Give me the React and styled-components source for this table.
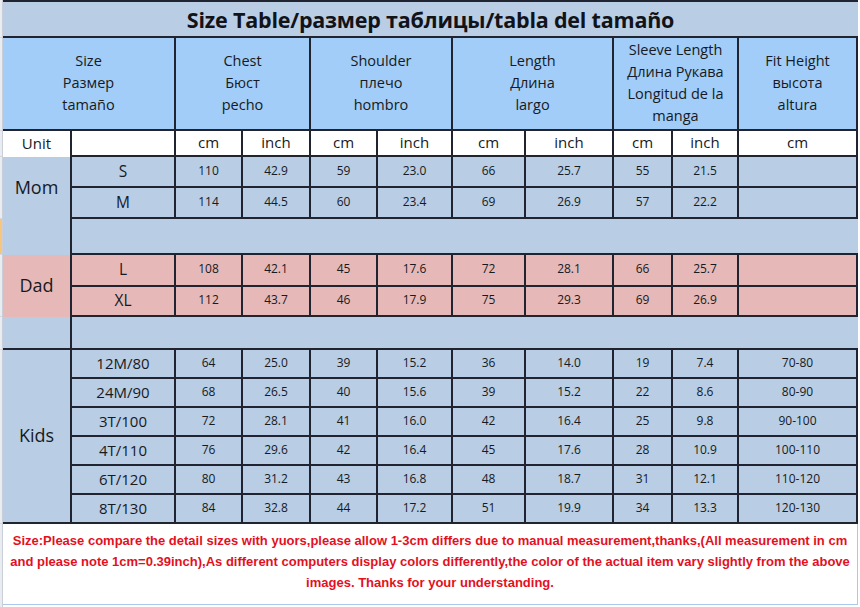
import React from "react";
import styled, { createGlobalStyle } from "styled-components";

const GlobalStyle = createGlobalStyle`
  html, body {
    margin: 0;
    padding: 0;
    background: #ffffff;
  }
  body {
    font-family: "Open Sans", "Noto Sans", "Liberation Sans", sans-serif;
    color: #161a22;
  }
`;

const LINE = "2px solid #1f2430";
const COLS = [69, 104, 67, 68, 67, 75, 73, 88, 59, 66, 119];
const TONES = {
  sky: "#a2cdf8",
  blue: "#b9cde5",
  pink: "#e6b9b8",
  white: "#ffffff",
};

const Page = styled.div`
  display: flex;
  width: 860px;
  height: 607px;
  overflow: hidden;
`;

const Gutter = styled.div`
  width: 3px;
  display: flex;
  flex-direction: column;
  background: #e9ecf1;
  border-right: 1px solid #c9ced8;
  box-sizing: border-box;
`;

const GutterMark = styled.div`
  height: ${(p) => p.$h}px;
  background: ${(p) => p.$color || "transparent"};
  border-bottom: 1px solid #d4d8df;
  box-sizing: border-box;
`;

const Sheet = styled.div`
  width: 855px;
  display: flex;
  flex-direction: column;
`;

const Grid = styled.div`
  display: grid;
  grid-template-columns: ${COLS.map((c) => `${c}px`).join(" ")};
  grid-template-rows: 38px 93px 26px 31px 31px 36px 32px 30px 33px repeat(6, 29px);
`;

const Cell = styled.div`
  box-sizing: border-box;
  display: flex;
  align-items: center;
  justify-content: center;
  text-align: center;
  background: ${(p) => TONES[p.$tone || "blue"]};
  border-right: ${(p) => (p.$noRight ? "none" : LINE)};
  border-bottom: ${(p) => (p.$noBottom ? "none" : LINE)};
  grid-column: span ${(p) => p.$span || 1};
  grid-row: span ${(p) => p.$rows || 1};
  font-size: 12px;
  white-space: nowrap;
`;

const TitleCell = styled(Cell)`
  border-top: ${LINE};
  border-right: none;
  font-size: 21.5px;
  font-weight: 700;
  color: #111318;
  letter-spacing: -0.2px;
`;

const HeaderCell = styled(Cell)`
  flex-direction: column;
  font-size: 14.5px;
  line-height: 22px;
  white-space: normal;
  padding-bottom: 2px;
`;

const UnitCell = styled(Cell)`
  font-size: 15px;
  padding-bottom: 2px;
`;

const GroupCell = styled(Cell)`
  font-size: 18px;
  padding-bottom: 2px;
`;

const SizeCell = styled(Cell)`
  font-size: ${(p) => (p.$kid ? 15 : 15.5)}px;
  padding-bottom: 2px;
`;

const ValueCell = styled(Cell)`
  font-size: 12px;
  padding-bottom: 3px;
`;

const Footer = styled.div`
  box-sizing: border-box;
  height: 83px;
  padding-top: 6px;
  border-right: 1px solid #a9c8ea;
  border-bottom: 1px solid #a9c8ea;
  margin-bottom: 2px;
  text-align: center;
  color: #e3101e;
  font-family: "Liberation Sans", Arial, sans-serif;
  font-weight: 700;
  font-size: 13px;
  letter-spacing: 0;
  line-height: 21px;
`;

const FooterLine = styled.div`
  white-space: nowrap;
`;

const HEADERS = [
  { lines: ["Size", "Размер", "tamaño"], span: 2 },
  { lines: ["Chest", "Бюст", "pecho"], span: 2 },
  { lines: ["Shoulder", "плечо", "hombro"], span: 2 },
  { lines: ["Length", "Длина", "largo"], span: 2 },
  { lines: ["Sleeve Length", "Длина Рукава", "Longitud de la", "manga"], span: 2 },
  { lines: ["Fit Height", "высота", "altura"], span: 1 },
];

const UNITS = ["", "cm", "inch", "cm", "inch", "cm", "inch", "cm", "inch", "cm"];

const GROUPS = [
  {
    name: "Mom",
    tone: "blue",
    rows: [
      ["S", 110, "42.9", 59, "23.0", 66, "25.7", 55, "21.5", ""],
      ["M", 114, "44.5", 60, "23.4", 69, "26.9", 57, "22.2", ""],
    ],
  },
  {
    name: "Dad",
    tone: "pink",
    rows: [
      ["L", 108, "42.1", 45, "17.6", 72, "28.1", 66, "25.7", ""],
      ["XL", 112, "43.7", 46, "17.9", 75, "29.3", 69, "26.9", ""],
    ],
  },
  {
    name: "Kids",
    tone: "blue",
    kid: true,
    rows: [
      ["12M/80", 64, "25.0", 39, "15.2", 36, "14.0", 19, "7.4", "70-80"],
      ["24M/90", 68, "26.5", 40, "15.6", 39, "15.2", 22, "8.6", "80-90"],
      ["3T/100", 72, "28.1", 41, "16.0", 42, "16.4", 25, "9.8", "90-100"],
      ["4T/110", 76, "29.6", 42, "16.4", 45, "17.6", 28, "10.9", "100-110"],
      ["6T/120", 80, "31.2", 43, "16.8", 48, "18.7", 31, "12.1", "110-120"],
      ["8T/130", 84, "32.8", 44, "17.2", 51, "19.9", 34, "13.3", "120-130"],
    ],
  },
];

const GroupRows = ({ group, lastBottom }) => (
  <>
    <GroupCell $tone={group.tone} $rows={group.rows.length} $noBottom={!lastBottom}>
      {group.name}
    </GroupCell>
    {group.rows.map((row) =>
      row.map((value, i) =>
        i === 0 ? (
          <SizeCell key={`${row[0]}-s`} $tone={group.tone} $kid={group.kid}>
            {value}
          </SizeCell>
        ) : (
          <ValueCell key={`${row[0]}-${i}`} $tone={group.tone}>
            {value}
          </ValueCell>
        )
      )
    )}
  </>
);

const Spacer = ({ bottomLeft }) => (
  <>
    <Cell $noBottom={!bottomLeft} />
    <Cell $span={10} $noRight />
  </>
);

const App = () => (
  <>
    <GlobalStyle />
    <Page>
      <Gutter>
        <GutterMark $h={38} />
        <GutterMark $h={93} />
        <GutterMark $h={26} />
        <GutterMark $h={62} />
        <GutterMark $h={36} $color="#f6c67c" />
        <GutterMark $h={62} />
        <GutterMark $h={33} />
        <GutterMark $h={174} />
      </Gutter>
      <Sheet>
        <Grid>
          <TitleCell $span={11}>Size Table/размер таблицы/tabla del tamaño</TitleCell>
          {HEADERS.map((h) => (
            <HeaderCell key={h.lines[0]} $tone="sky" $span={h.span}>
              {h.lines.map((l) => (
                <span key={l}>{l}</span>
              ))}
            </HeaderCell>
          ))}
          <UnitCell $tone="white" $noBottom>
            Unit
          </UnitCell>
          {UNITS.map((u, i) => (
            <UnitCell key={i} $tone="white">
              {u}
            </UnitCell>
          ))}
          <GroupRows group={GROUPS[0]} />
          <Spacer />
          <GroupRows group={GROUPS[1]} />
          <Spacer bottomLeft />
          <GroupRows group={GROUPS[2]} lastBottom />
        </Grid>
        <Footer>
          <FooterLine>
            Size:Please compare the detail sizes with yuors,please allow 1-3cm differs due to manual
            measurement,thanks,(All measurement in cm
          </FooterLine>
          <FooterLine>
            and please note 1cm=0.39inch),As different computers display colors differently,the color
            of the actual item vary slightly from the above
          </FooterLine>
          <FooterLine>images. Thanks for your understanding.</FooterLine>
        </Footer>
      </Sheet>
    </Page>
  </>
);

export default App;
